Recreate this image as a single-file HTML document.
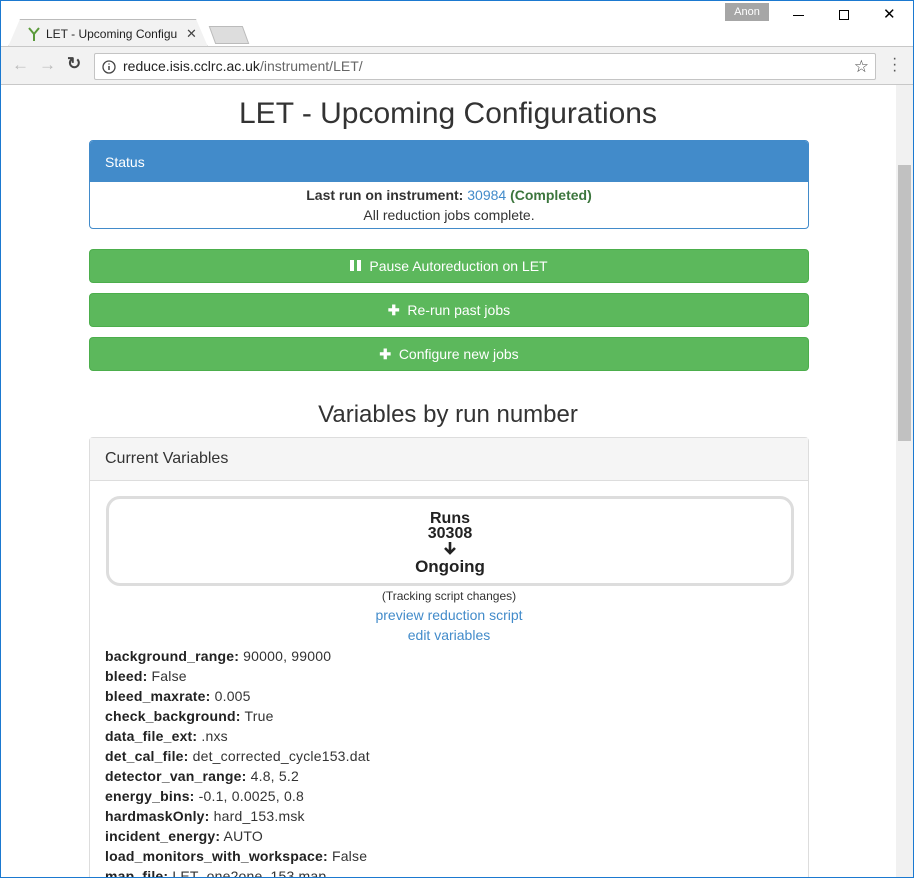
<!DOCTYPE html>
<html><head><meta charset="utf-8"><style>
*{box-sizing:border-box}
body{margin:0;width:914px;height:878px;overflow:hidden;font-family:"Liberation Sans",Arial,sans-serif;background:#fff;position:relative;color:#333}
.frame{position:absolute;inset:0;border:1px solid #1b79d0;pointer-events:none;z-index:10}
.titlebar{position:absolute;left:0;top:0;width:914px;height:47px;background:#fff}
.tab{position:absolute;left:8px;top:19px;width:200px;height:28px;background:#f2f2f2;border:1px solid #bbb;border-bottom:none;clip-path:polygon(0 100%,6% 0,94% 0,100% 100%)}
.tabtext{position:absolute;left:46px;top:27px;font-size:12px;color:#222}
.toolbar{position:absolute;left:0;top:46px;width:914px;height:39px;background:#f2f2f2;border-top:1px solid #c8c8c8;border-bottom:1px solid #c8c8c8}
.url{position:absolute;left:94px;top:6px;width:782px;height:27px;background:#fff;border:1px solid #c4c4c4;border-radius:2px;font-size:14px;line-height:25px;padding-left:28px;color:#222}
.url span{color:#666}
.page{position:absolute;left:0;top:85px;width:896px;height:792px;overflow:hidden}
.sb{position:absolute;left:896px;top:85px;width:17px;height:792px;background:#f1f1f1}
.thumb{position:absolute;left:2px;top:80px;width:13px;height:276px;background:#c1c1c1}
h1{position:absolute;left:0;width:896px;text-align:center;top:12px;margin:0;font-weight:400;font-size:30px;color:#333}
.status{position:absolute;left:89px;top:55px;width:720px;height:89px;border:1px solid #428bca;border-radius:4px;overflow:hidden}
.status .hd{background:#428bca;color:#fff;height:41px;padding:13px 15px;font-size:14px}
.status .bd{text-align:center;font-size:14px;padding-top:3px;line-height:20px}
.btn{position:absolute;left:89px;width:720px;height:34px;background:#5cb85c;border:1px solid #4cae4c;border-radius:4px;color:#fff;font-size:14px;text-align:center;line-height:32px}
h2{position:absolute;left:0;width:896px;text-align:center;top:316px;margin:0;font-weight:400;font-size:24px;color:#333}
.panel{position:absolute;left:89px;top:352px;width:720px;height:500px;border:1px solid #ddd;border-radius:4px}
.panel .hd{background:#f5f5f5;border-bottom:1px solid #ddd;height:43px;padding:12px 15px;font-size:16px}
.runs{position:absolute;left:16px;top:58px;width:688px;height:90px;border:3px solid #ddd;border-radius:14px;text-align:center;font-weight:bold;font-size:16px;line-height:15px;padding-top:12px;color:#222}
.c{position:absolute;left:0;width:718px;text-align:center;font-size:14px}
a{color:#428bca;text-decoration:none}
.vars{position:absolute;left:15px;top:208px;font-size:14px;line-height:20px;color:#333;letter-spacing:0.2px}
.vars b{color:#222}
</style></head><body>
<div class="titlebar">
 <div class="tab"></div>
 <svg style="position:absolute;left:27px;top:26px" width="14" height="16"><path d="M2 2 L7 8 L12 2 M7 8 V15" stroke="#5a9a3a" stroke-width="2" fill="none"/></svg>
 <div class="tabtext">LET - Upcoming Configu</div>
 <div style="position:absolute;left:186px;top:26px;font-size:13px;color:#444">✕</div>
 <div style="position:absolute;left:212px;top:26px;width:34px;height:18px;background:#ddd;border:1px solid #bbb;transform:skewX(20deg)"></div>
 <div style="position:absolute;left:725px;top:3px;width:44px;height:18px;background:#a6a6a6;color:#fff;font-size:11px;text-align:center;line-height:18px">Anon</div>
 <div style="position:absolute;left:793px;top:15px;width:11px;height:1px;background:#000"></div>
 <div style="position:absolute;left:839px;top:10px;width:10px;height:10px;border:1px solid #000"></div>
 <div style="position:absolute;left:883px;top:5px;font-size:15px;color:#000">✕</div>
</div>
<div class="toolbar">
 <div style="position:absolute;left:12px;top:8px;font-size:17px;color:#bbb">←</div>
 <div style="position:absolute;left:39px;top:8px;font-size:17px;color:#bbb">→</div>
 <div style="position:absolute;left:67px;top:7px;font-size:17px;color:#444;font-weight:bold">↻</div>
 <div class="url"><svg style="position:absolute;left:7px;top:6px" width="14" height="14"><circle cx="7" cy="7" r="6" stroke="#444" stroke-width="1.3" fill="none"/><path d="M7 6v4M7 3.5v1" stroke="#444" stroke-width="1.5"/></svg>reduce.isis.cclrc.ac.uk<span>/instrument/LET/</span>
 <div style="position:absolute;right:6px;top:0;font-size:17px;color:#444">☆</div></div>
 <div style="position:absolute;left:892px;top:9px;font-size:16px;color:#555;line-height:6px">·<br>·<br>·</div>
</div>
<div class="page">
 <h1>LET - Upcoming Configurations</h1>
 <div class="status"><div class="hd">Status</div>
  <div class="bd"><b>Last run on instrument:</b> <a>30984</a> <b style="color:#3c763d">(Completed)</b><br>All reduction jobs complete.</div></div>
 <div class="btn" style="top:164px"><span style="display:inline-block;width:4px;height:11px;background:#fff;margin-right:3px"></span><span style="display:inline-block;width:4px;height:11px;background:#fff;margin-right:8px"></span>Pause Autoreduction on LET</div>
 <div class="btn" style="top:208px"><b>✚</b>&nbsp; Re-run past jobs</div>
 <div class="btn" style="top:252px"><b>✚</b>&nbsp; Configure new jobs</div>
 <h2>Variables by run number</h2>
 <div class="panel"><div class="hd">Current Variables</div>
  <div class="runs">Runs<br>30308<br><svg width="14" height="14" viewBox="0 0 14 14"><path d="M7 1V12M2 7L7 12L12 7" stroke="#222" stroke-width="2.6" fill="none"/></svg><br><span style="font-size:17px;line-height:18px">Ongoing</span></div>
  <div class="c" style="top:151px;font-size:12px">(Tracking script changes)</div>
  <div class="c" style="top:169px"><a>preview reduction script</a></div>
  <div class="c" style="top:189px"><a>edit variables</a></div>
  <div class="vars">
   <b>background_range:</b> 90000, 99000<br><b>bleed:</b> False<br><b>bleed_maxrate:</b> 0.005<br><b>check_background:</b> True<br><b>data_file_ext:</b> .nxs<br><b>det_cal_file:</b> det_corrected_cycle153.dat<br><b>detector_van_range:</b> 4.8, 5.2<br><b>energy_bins:</b> -0.1, 0.0025, 0.8<br><b>hardmaskOnly:</b> hard_153.msk<br><b>incident_energy:</b> AUTO<br><b>load_monitors_with_workspace:</b> False<br><b>map_file:</b> LET_one2one_153.map
  </div>
 </div>
</div>
<div class="sb"><div class="thumb"></div></div>
<div class="frame"></div>
</body></html>
